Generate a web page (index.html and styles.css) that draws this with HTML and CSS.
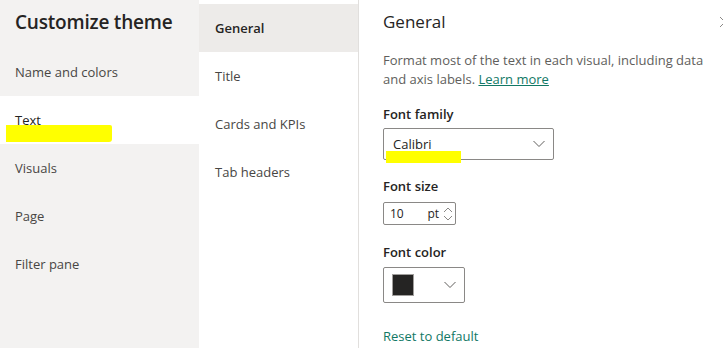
FILE: index.html
```html
<!DOCTYPE html>
<html>
<head>
  <meta name="viewport" content="width=device-width, initial-scale=1.0">
  <title>Customize theme</title>
  <link rel="stylesheet" href="styles.css">
</head>
<body>
  <div class="theme-dialog">
    <div class="side-nav">
      <h1>Customize theme</h1>
      <div class="nav-item">Name and colors</div>
      <div class="nav-item nav-item-active">Text<span class="marker marker-text"></span></div>
      <div class="nav-item">Visuals</div>
      <div class="nav-item">Page</div>
      <div class="nav-item">Filter pane</div>
    </div>

    <div class="sub-nav">
      <div class="sub-item sub-item-active">General</div>
      <div class="sub-item">Title</div>
      <div class="sub-item">Cards and KPIs</div>
      <div class="sub-item">Tab headers</div>
    </div>

    <div class="content">
      <h2>General</h2>
      <svg class="close-icon" width="12" height="12" viewBox="0 0 12 12">
        <path d="M1 1 L11 11 M11 1 L1 11" stroke="#8a8886" stroke-width="1" fill="none"/>
      </svg>
      <p class="intro">Format most of the text in each visual, including data and axis labels. <a href="#">Learn more</a></p>

      <div class="field-label">Font family</div>
      <div class="dropdown">
        <span>Calibri</span>
        <svg class="chevron" width="12" height="8" viewBox="0 0 12 8">
          <path d="M0.5 1 L6 6.5 L11.5 1" stroke="#605e5c" stroke-width="1" fill="none"/>
        </svg>
        <span class="marker marker-font"></span>
      </div>

      <div class="field-label">Font size</div>
      <div class="spinner">
        <span class="spin-value">10</span>
        <span class="spin-unit">pt</span>
        <svg class="spin-arrows" width="10" height="18" viewBox="0 0 10 18">
          <path d="M1 7 L5 3 L9 7" stroke="#8a8886" stroke-width="1" fill="none"/>
          <path d="M1 11 L5 15 L9 11" stroke="#8a8886" stroke-width="1" fill="none"/>
        </svg>
      </div>

      <div class="field-label">Font color</div>
      <div class="color-picker">
        <span class="swatch"></span>
        <svg class="chevron" width="12" height="8" viewBox="0 0 12 8">
          <path d="M0.5 1 L6 6.5 L11.5 1" stroke="#605e5c" stroke-width="1" fill="none"/>
        </svg>
      </div>

      <a href="#" class="reset-link">Reset to default</a>
    </div>
  </div>
</body>
</html>
```

FILE: styles.css
```css
body {
  margin: 0;
  font-family: 'Open Sans', 'Noto Sans', sans-serif;
  color: #252423;
  background-color: #ffffff;
}
.theme-dialog {
  display: flex;
  width: 723px;
  height: 348px;
  overflow: hidden;
}
.side-nav {
  width: 199px;
  flex-shrink: 0;
  background-color: #f3f2f1;
}
.side-nav h1 {
  margin: 0;
  height: 48px;
  line-height: 44px;
  padding-left: 15px;
  font-size: 19px;
  font-weight: 600;
  color: #252423;
  letter-spacing: -0.2px;
}
.nav-item {
  position: relative;
  height: 48px;
  line-height: 48px;
  padding-left: 15px;
  font-size: 13px;
  color: #484644;
}
.nav-item-active {
  background-color: #ffffff;
  color: #252423;
}
.marker {
  position: absolute;
  background-color: #ffff00;
}
.marker-text {
  left: 6px;
  top: 29px;
  width: 106px;
  height: 17px;
  border-radius: 0 2px 3px 0;
}
.sub-nav {
  width: 159px;
  flex-shrink: 0;
  padding-top: 4px;
  border-right: 1px solid #e1dfdd;
  background-color: #ffffff;
}
.sub-item {
  height: 48px;
  line-height: 48px;
  padding-left: 16px;
  font-size: 13px;
  color: #484644;
}
.sub-item-active {
  background-color: #edebe9;
  color: #252423;
  font-weight: 600;
}
.content {
  position: relative;
  flex: 1;
  padding-left: 24px;
}
.content h2 {
  margin: 10px 0 0 0;
  font-size: 17px;
  line-height: 24px;
  font-weight: 400;
  color: #252423;
}
.close-icon {
  position: absolute;
  top: 16px;
  right: -8px;
}
.intro {
  margin: 17px 0 0 0;
  width: 335px;
  font-size: 13px;
  line-height: 19px;
  color: #605e5c;
}
.intro a {
  color: #117865;
}
.field-label {
  margin-top: 16px;
  font-size: 13px;
  line-height: 18px;
  font-weight: 600;
  color: #252423;
}
.dropdown {
  position: relative;
  display: flex;
  align-items: center;
  justify-content: space-between;
  box-sizing: border-box;
  width: 171px;
  height: 32px;
  margin-top: 5px;
  padding: 0 8px 0 9px;
  border: 1px solid #8a8886;
  border-radius: 2px;
  font-size: 13px;
  color: #252423;
}
.marker-font {
  left: 2px;
  top: 22px;
  width: 75px;
  height: 12px;
}
.dropdown + .field-label {
  margin-top: 17px;
}
.spinner {
  display: flex;
  align-items: center;
  box-sizing: border-box;
  width: 73px;
  height: 23px;
  margin-top: 7px;
  padding: 0 2px 0 6px;
  border: 1px solid #8a8886;
  border-radius: 2px;
  font-size: 12px;
  color: #252423;
}
.spin-value {
  flex: 1;
}
.spin-unit {
  margin-right: 4px;
}
.spinner + .field-label {
  margin-top: 18px;
}
.color-picker {
  display: flex;
  align-items: center;
  justify-content: space-between;
  box-sizing: border-box;
  width: 82px;
  height: 36px;
  margin-top: 6px;
  padding: 0 8px 0 8px;
  border: 1px solid #8a8886;
  border-radius: 2px;
}
.swatch {
  width: 20px;
  height: 20px;
  background-color: #252423;
  border: 1px solid #a19f9d;
}
.reset-link {
  display: inline-block;
  margin-top: 24px;
  font-size: 13px;
  line-height: 18px;
  color: #117865;
  text-decoration: none;
}
```
